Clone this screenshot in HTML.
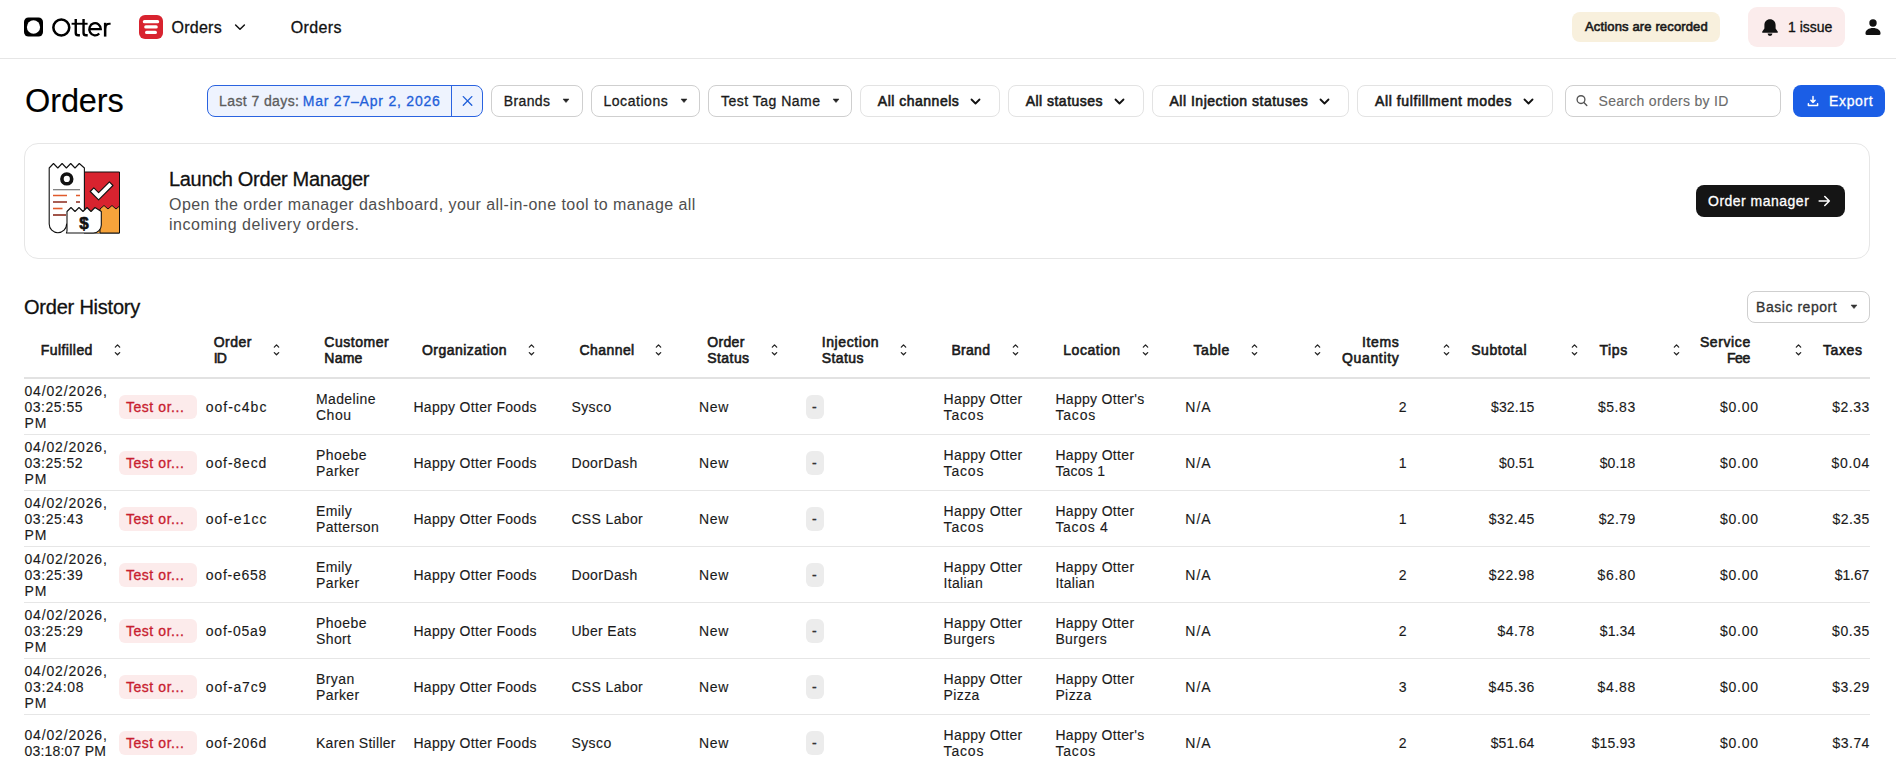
<!DOCTYPE html><html><head><meta charset="utf-8"><style>
html,body{margin:0;padding:0;background:#fff;width:1896px;height:769px;overflow:hidden;position:relative;font-family:"Liberation Sans",sans-serif;}
.t{position:absolute;white-space:nowrap;}
.b{position:absolute;box-sizing:border-box;}
</style></head><body>
<div class="b" style="left:0px;top:58px;width:1896px;height:1px;background:#e6e6e6"></div>
<svg class="b" style="left:24px;top:17px" width="19" height="20" viewBox="0 0 19 20"><rect x="0" y="0.5" width="19" height="19" rx="4.5" fill="#000"/><ellipse cx="9.5" cy="10" rx="6.6" ry="6.8" fill="#fff"/></svg>
<svg class="b" style="left:0;top:0" width="120" height="50" viewBox="0 0 120 50"><g fill="none" stroke="#000"><circle cx="61.3" cy="27.45" r="7.95" stroke-width="2.55"/><path d="M75.75 19 V33 Q75.75 35.3 78.2 35.3 H79.9 M83.55 19 V33 Q83.55 35.3 86 35.3 H87.7" stroke-width="2.4"/><path d="M71.6 23.75 H87.6" stroke-width="1.9"/><path d="M89.3 29.2 H100.8 A5.75 6.1 0 1 0 99.2 33.5" stroke-width="2.3"/><path d="M105.15 22.8 V36.6" stroke-width="2.5"/><path d="M105.15 28.5 Q105.15 23.75 109.6 23.75 H110.6" stroke-width="2.2"/></g></svg>
<svg class="b" style="left:139px;top:15px" width="24" height="24" viewBox="0 0 24 24"><rect width="24" height="24" rx="6" fill="#d8232f"/><rect x="3.8" y="5" width="16.4" height="3.3" rx="1.65" fill="#fff"/><rect x="5.2" y="10.3" width="13.6" height="3.3" rx="1.65" fill="#fff"/><rect x="6" y="15.8" width="12" height="3.3" rx="1.65" fill="#fff"/></svg>
<div class="t" style="top:17.66px;font-size:16px;line-height:19.2px;color:#111;-webkit-text-stroke:0.3px #111;letter-spacing:0.260px;left:171.50px;">Orders</div>
<svg class="b" style="left:234px;top:22px" width="12" height="10" viewBox="0 0 12 10"><path d="M1.6 3 L6 7.3 L10.4 3" fill="none" stroke="#111" stroke-width="1.5" stroke-linecap="round" stroke-linejoin="round"/></svg>
<div class="t" style="top:17.66px;font-size:16px;line-height:19.2px;color:#111;-webkit-text-stroke:0.3px #111;letter-spacing:0.360px;left:290.70px;">Orders</div>
<div class="b" style="left:1572px;top:12px;width:148px;height:30px;background:#f8f0dd;border-radius:8px"></div>
<div class="t" style="top:18.90px;font-size:13px;line-height:15.6px;color:#1a1a1a;-webkit-text-stroke:0.6px #1a1a1a;letter-spacing:0.145px;left:1585.00px;">Actions are recorded</div>
<div class="b" style="left:1748px;top:7px;width:97px;height:40px;background:#fbecec;border-radius:9px"></div>
<svg class="b" style="left:1761px;top:18px" width="18" height="19" viewBox="0 0 18 19"><path d="M9 1.2c-3.3 0-5.6 2.6-5.6 5.8v3.6L1.3 13.4c-.4.6 0 1.3.7 1.3h14c.7 0 1.1-.7.7-1.3l-2.1-2.8V7c0-3.2-2.3-5.8-5.6-5.8z" fill="#111"/><path d="M6.6 15.6h4.8a2.4 2.4 0 0 1-4.8 0z" fill="#111"/></svg>
<div class="t" style="top:18.75px;font-size:14px;line-height:16.8px;color:#111;-webkit-text-stroke:0.3px #111;letter-spacing:0.007px;left:1788.00px;">1 issue</div>
<svg class="b" style="left:1864px;top:18px" width="18" height="18" viewBox="0 0 18 18"><circle cx="9" cy="5" r="3.7" fill="#111"/><path d="M1.5 15.2c0-3 3.2-5.2 7.5-5.2s7.5 2.2 7.5 5.2v.6c0 .7-.5 1.2-1.2 1.2H2.7c-.7 0-1.2-.5-1.2-1.2z" fill="#111"/></svg>
<div class="t" style="top:81.94px;font-size:32.5px;line-height:39.0px;color:#000;-webkit-text-stroke:0.12px #000;letter-spacing:-0.105px;left:25.00px;">Orders</div>
<div class="b" style="left:207px;top:85px;width:276px;height:32px;background:#eef3fe;border:1px solid #2a63e0;border-radius:8px"></div>
<div class="b" style="left:451px;top:85px;width:1px;height:32px;background:#2a63e0"></div>
<div class="t" style="top:93.05px;font-size:14px;line-height:16.8px;color:#5c5c5c;-webkit-text-stroke:0.3px #5c5c5c;letter-spacing:0.410px;left:219.00px;">Last 7 days:</div>
<div class="t" style="top:93.05px;font-size:14px;line-height:16.8px;color:#1f5fd9;-webkit-text-stroke:0.3px #1f5fd9;letter-spacing:0.791px;left:302.70px;">Mar 27–Apr 2, 2026</div>
<svg class="b" style="left:461px;top:95px" width="12" height="12" viewBox="0 0 12 12"><path d="M2.3 1.6 L10.8 10.2 M10.8 1.6 L2.3 10.2" stroke="#1f5fd9" stroke-width="1.35" stroke-linecap="round"/></svg>
<div class="b" style="left:491px;top:85px;width:92px;height:32px;background:#fff;border:1px solid #cfcfcf;border-radius:8px"></div>
<div class="t" style="top:93.05px;font-size:14px;line-height:16.8px;color:#1a1a1a;-webkit-text-stroke:0.3px #1a1a1a;letter-spacing:0.368px;left:503.80px;">Brands</div>
<svg class="b" style="left:561.9px;top:98px" width="8" height="6" viewBox="0 0 8 6"><path d="M1 1 L7 1 L4 4.6 Z" fill="#222" stroke="#222" stroke-width="0.5" stroke-linejoin="round"/></svg>
<div class="b" style="left:591px;top:85px;width:109px;height:32px;background:#fff;border:1px solid #cfcfcf;border-radius:8px"></div>
<div class="t" style="top:93.05px;font-size:14px;line-height:16.8px;color:#1a1a1a;-webkit-text-stroke:0.3px #1a1a1a;letter-spacing:0.559px;left:603.40px;">Locations</div>
<svg class="b" style="left:679.9px;top:98px" width="8" height="6" viewBox="0 0 8 6"><path d="M1 1 L7 1 L4 4.6 Z" fill="#222" stroke="#222" stroke-width="0.5" stroke-linejoin="round"/></svg>
<div class="b" style="left:708px;top:85px;width:144px;height:32px;background:#fff;border:1px solid #cfcfcf;border-radius:8px"></div>
<div class="t" style="top:93.05px;font-size:14px;line-height:16.8px;color:#1a1a1a;-webkit-text-stroke:0.3px #1a1a1a;letter-spacing:0.490px;left:721.00px;">Test Tag Name</div>
<svg class="b" style="left:832.4px;top:98px" width="8" height="6" viewBox="0 0 8 6"><path d="M1 1 L7 1 L4 4.6 Z" fill="#222" stroke="#222" stroke-width="0.5" stroke-linejoin="round"/></svg>
<div class="b" style="left:860px;top:85px;width:140px;height:32px;background:#fff;border:1px solid #e3e3e3;border-radius:8px"></div>
<div class="t" style="top:93.05px;font-size:14px;line-height:16.8px;color:#1a1a1a;-webkit-text-stroke:0.6px #1a1a1a;letter-spacing:0.501px;left:877.80px;">All channels</div>
<svg class="b" style="left:969.6px;top:96.6px" width="12" height="10" viewBox="0 0 12 10"><path d="M1.5 2.5 L5.5 6.5 L9.5 2.5" fill="none" stroke="#111" stroke-width="1.8" stroke-linecap="round" stroke-linejoin="round"/></svg>
<div class="b" style="left:1008px;top:85px;width:136px;height:32px;background:#fff;border:1px solid #e3e3e3;border-radius:8px"></div>
<div class="t" style="top:93.05px;font-size:14px;line-height:16.8px;color:#1a1a1a;-webkit-text-stroke:0.6px #1a1a1a;letter-spacing:0.474px;left:1025.70px;">All statuses</div>
<svg class="b" style="left:1114px;top:96.6px" width="12" height="10" viewBox="0 0 12 10"><path d="M1.5 2.5 L5.5 6.5 L9.5 2.5" fill="none" stroke="#111" stroke-width="1.8" stroke-linecap="round" stroke-linejoin="round"/></svg>
<div class="b" style="left:1152px;top:85px;width:197px;height:32px;background:#fff;border:1px solid #e3e3e3;border-radius:8px"></div>
<div class="t" style="top:93.05px;font-size:14px;line-height:16.8px;color:#1a1a1a;-webkit-text-stroke:0.6px #1a1a1a;letter-spacing:0.504px;left:1169.50px;">All Injection statuses</div>
<svg class="b" style="left:1318.8px;top:96.6px" width="12" height="10" viewBox="0 0 12 10"><path d="M1.5 2.5 L5.5 6.5 L9.5 2.5" fill="none" stroke="#111" stroke-width="1.8" stroke-linecap="round" stroke-linejoin="round"/></svg>
<div class="b" style="left:1357px;top:85px;width:196px;height:32px;background:#fff;border:1px solid #e3e3e3;border-radius:8px"></div>
<div class="t" style="top:93.05px;font-size:14px;line-height:16.8px;color:#1a1a1a;-webkit-text-stroke:0.6px #1a1a1a;letter-spacing:0.601px;left:1375.00px;">All fulfillment modes</div>
<svg class="b" style="left:1522.6px;top:96.6px" width="12" height="10" viewBox="0 0 12 10"><path d="M1.5 2.5 L5.5 6.5 L9.5 2.5" fill="none" stroke="#111" stroke-width="1.8" stroke-linecap="round" stroke-linejoin="round"/></svg>
<div class="b" style="left:1565px;top:85px;width:216px;height:32px;background:#fff;border:1px solid #cfcfcf;border-radius:8px"></div>
<svg class="b" style="left:1575px;top:94px" width="14" height="14" viewBox="0 0 14 14"><circle cx="6" cy="5.6" r="3.9" fill="none" stroke="#555" stroke-width="1.35"/><path d="M8.9 8.5 L11.8 11.6" stroke="#555" stroke-width="1.4" stroke-linecap="round"/></svg>
<div class="t" style="top:93.05px;font-size:14px;line-height:16.8px;color:#6b6b6b;-webkit-text-stroke:0.12px #6b6b6b;letter-spacing:0.289px;left:1598.60px;">Search orders by ID</div>
<div class="b" style="left:1793px;top:85px;width:92px;height:32px;background:#1b5ee6;border-radius:8px"></div>
<svg class="b" style="left:1806px;top:94px" width="14" height="14" viewBox="0 0 14 14"><path d="M7 2.4 V8.4 M4.9 6.3 L7 8.4 L9.1 6.3" fill="none" stroke="#fff" stroke-width="1.5" stroke-linecap="round" stroke-linejoin="round"/><path d="M2.4 9.7 V11.4 H11.6 V9.7" fill="none" stroke="#fff" stroke-width="1.5" stroke-linecap="round" stroke-linejoin="round"/></svg>
<div class="t" style="top:93.05px;font-size:14px;line-height:16.8px;color:#fff;-webkit-text-stroke:0.3px #fff;letter-spacing:0.648px;left:1829.00px;">Export</div>
<div class="b" style="left:24px;top:143px;width:1846px;height:116px;border:1px solid #e6e6e6;border-radius:14px"></div>
<svg class="b" style="left:0;top:0" width="200" height="260" viewBox="0 0 200 260">
<path d="M84 172 H119.5 V233 H84 Z" fill="#d8232f" stroke="#111" stroke-width="1"/><path d="M84.5 210 H100 V233 H84.5 Z" fill="#f6a33b"/>
<path d="M100 209 L104 205.5 L108 209 L112 205.5 L116 209 L119.5 206 V233 H100 Z" fill="#f6a33b" stroke="#111" stroke-width="1"/>
<path d="M90.2 191.5 L93.8 187.9 L98.6 192.7 L109.4 181.9 L113 185.5 L98.6 199.9 Z" fill="#fff" stroke="#111" stroke-width="1.1" stroke-linejoin="round"/>
<path d="M49.2 168 L53.5 163.5 L57.8 168 L62.1 163.5 L66.4 168 L70.7 163.5 L75 168 L79.3 163.5 L84.4 168 V226 H66.6 V224 A8.7 8.7 0 0 1 49.2 224 Z" fill="#fff" stroke="#111" stroke-width="1.1" stroke-linejoin="round"/>
<circle cx="66.8" cy="178.9" r="4.9" fill="none" stroke="#111" stroke-width="3.6"/>
<path d="M53 189.7 H80" stroke="#777" stroke-width="1.2"/>
<path d="M53 195.5 H67 M76 195.5 H80" stroke="#e05a2b" stroke-width="1.6"/>
<path d="M53 202 H67 M76 202 H80" stroke="#8a2a1c" stroke-width="1.6"/>
<path d="M53 208.5 H62.5" stroke="#e05a2b" stroke-width="1.6"/>
<path d="M53 215 H66" stroke="#8a2a1c" stroke-width="1.6"/>
<path d="M67 211.5 L71 207.5 L75 211.5 L79 207.5 L83 211.5 L87 207.5 L91 211.5 L95 207.5 L101.3 211.5 V225 A8 8 0 0 1 93.3 233 H66.4 A9 9 0 0 0 67 231 Z" fill="#fff" stroke="#111" stroke-width="1.1" stroke-linejoin="round"/>
<text x="84" y="229.3" font-family="Liberation Sans" font-weight="700" font-size="17" text-anchor="middle" fill="#111" stroke="#111" stroke-width="0.6">$</text>
</svg>
<div class="t" style="top:167.37px;font-size:20px;line-height:24.0px;color:#111;-webkit-text-stroke:0.3px #111;letter-spacing:-0.331px;left:169.00px;">Launch Order Manager</div>
<div class="t" style="top:195.26px;font-size:16px;line-height:20px;color:#4f4f4f;letter-spacing:0.449px;left:169.00px;">Open the order manager dashboard, your all-in-one tool to manage all</div>
<div class="t" style="top:215.26px;font-size:16px;line-height:20px;color:#4f4f4f;letter-spacing:0.506px;left:169.00px;">incoming delivery orders.</div>
<div class="b" style="left:1696px;top:185px;width:149px;height:32px;background:#151515;border-radius:8px"></div>
<div class="t" style="top:192.75px;font-size:14px;line-height:16.8px;color:#fff;-webkit-text-stroke:0.3px #fff;letter-spacing:0.489px;left:1708.00px;">Order manager</div>
<svg class="b" style="left:1818px;top:195px" width="13" height="12" viewBox="0 0 13 12"><path d="M1.2 6 H11.3 M6.8 1.5 L11.3 6 L6.8 10.5" fill="none" stroke="#fff" stroke-width="1.6" stroke-linecap="round" stroke-linejoin="round"/></svg>
<div class="t" style="top:294.67px;font-size:20px;line-height:24.0px;color:#111;-webkit-text-stroke:0.3px #111;letter-spacing:-0.217px;left:24.00px;">Order History</div>
<div class="b" style="left:1747px;top:291px;width:123px;height:32px;background:#fff;border:1px solid #cfcfcf;border-radius:8px"></div>
<div class="t" style="top:298.75px;font-size:14px;line-height:16.8px;color:#333;-webkit-text-stroke:0.3px #333;letter-spacing:0.546px;left:1756.00px;">Basic report</div>
<svg class="b" style="left:1849.5px;top:304px" width="8" height="6" viewBox="0 0 8 6"><path d="M1 1 L7 1 L4 4.6 Z" fill="#333" stroke="#333" stroke-width="0.5" stroke-linejoin="round"/></svg>
<div class="t" style="top:342.85px;font-size:14px;line-height:15.8px;color:#1a1a1a;-webkit-text-stroke:0.6px #1a1a1a;letter-spacing:0.432px;left:40.70px;">Fulfilled</div>
<svg class="b" style="left:112.9px;top:343px" width="9" height="14" viewBox="0 0 9 14"><path d="M2.3 4.1 L4.5 1.9 L6.7 4.1 M2.3 9.6 L4.5 11.8 L6.7 9.6" fill="none" stroke="#222" stroke-width="1.3" stroke-linecap="round" stroke-linejoin="round"/></svg>
<div class="t" style="top:335.05px;font-size:14px;line-height:15.8px;color:#1a1a1a;-webkit-text-stroke:0.6px #1a1a1a;letter-spacing:0.503px;left:213.70px;">Order</div>
<div class="t" style="top:350.85px;font-size:14px;line-height:15.8px;color:#1a1a1a;-webkit-text-stroke:0.6px #1a1a1a;letter-spacing:-0.800px;left:213.70px;">ID</div>
<svg class="b" style="left:271.8px;top:343px" width="9" height="14" viewBox="0 0 9 14"><path d="M2.3 4.1 L4.5 1.9 L6.7 4.1 M2.3 9.6 L4.5 11.8 L6.7 9.6" fill="none" stroke="#222" stroke-width="1.3" stroke-linecap="round" stroke-linejoin="round"/></svg>
<div class="t" style="top:335.05px;font-size:14px;line-height:15.8px;color:#1a1a1a;-webkit-text-stroke:0.6px #1a1a1a;letter-spacing:0.517px;left:324.30px;">Customer</div>
<div class="t" style="top:350.85px;font-size:14px;line-height:15.8px;color:#1a1a1a;-webkit-text-stroke:0.6px #1a1a1a;letter-spacing:0.218px;left:324.30px;">Name</div>
<div class="t" style="top:342.85px;font-size:14px;line-height:15.8px;color:#1a1a1a;-webkit-text-stroke:0.6px #1a1a1a;letter-spacing:0.475px;left:421.90px;">Organization</div>
<svg class="b" style="left:526.9px;top:343px" width="9" height="14" viewBox="0 0 9 14"><path d="M2.3 4.1 L4.5 1.9 L6.7 4.1 M2.3 9.6 L4.5 11.8 L6.7 9.6" fill="none" stroke="#222" stroke-width="1.3" stroke-linecap="round" stroke-linejoin="round"/></svg>
<div class="t" style="top:342.85px;font-size:14px;line-height:15.8px;color:#1a1a1a;-webkit-text-stroke:0.6px #1a1a1a;letter-spacing:0.408px;left:579.60px;">Channel</div>
<svg class="b" style="left:654.2px;top:343px" width="9" height="14" viewBox="0 0 9 14"><path d="M2.3 4.1 L4.5 1.9 L6.7 4.1 M2.3 9.6 L4.5 11.8 L6.7 9.6" fill="none" stroke="#222" stroke-width="1.3" stroke-linecap="round" stroke-linejoin="round"/></svg>
<div class="t" style="top:335.05px;font-size:14px;line-height:15.8px;color:#1a1a1a;-webkit-text-stroke:0.6px #1a1a1a;letter-spacing:0.328px;left:707.30px;">Order</div>
<div class="t" style="top:350.85px;font-size:14px;line-height:15.8px;color:#1a1a1a;-webkit-text-stroke:0.6px #1a1a1a;letter-spacing:0.422px;left:707.30px;">Status</div>
<svg class="b" style="left:769.6px;top:343px" width="9" height="14" viewBox="0 0 9 14"><path d="M2.3 4.1 L4.5 1.9 L6.7 4.1 M2.3 9.6 L4.5 11.8 L6.7 9.6" fill="none" stroke="#222" stroke-width="1.3" stroke-linecap="round" stroke-linejoin="round"/></svg>
<div class="t" style="top:335.05px;font-size:14px;line-height:15.8px;color:#1a1a1a;-webkit-text-stroke:0.6px #1a1a1a;letter-spacing:0.594px;left:821.70px;">Injection</div>
<div class="t" style="top:350.85px;font-size:14px;line-height:15.8px;color:#1a1a1a;-webkit-text-stroke:0.6px #1a1a1a;letter-spacing:0.422px;left:821.70px;">Status</div>
<svg class="b" style="left:899px;top:343px" width="9" height="14" viewBox="0 0 9 14"><path d="M2.3 4.1 L4.5 1.9 L6.7 4.1 M2.3 9.6 L4.5 11.8 L6.7 9.6" fill="none" stroke="#222" stroke-width="1.3" stroke-linecap="round" stroke-linejoin="round"/></svg>
<div class="t" style="top:342.85px;font-size:14px;line-height:15.8px;color:#1a1a1a;-webkit-text-stroke:0.6px #1a1a1a;letter-spacing:0.310px;left:951.40px;">Brand</div>
<svg class="b" style="left:1011px;top:343px" width="9" height="14" viewBox="0 0 9 14"><path d="M2.3 4.1 L4.5 1.9 L6.7 4.1 M2.3 9.6 L4.5 11.8 L6.7 9.6" fill="none" stroke="#222" stroke-width="1.3" stroke-linecap="round" stroke-linejoin="round"/></svg>
<div class="t" style="top:342.85px;font-size:14px;line-height:15.8px;color:#1a1a1a;-webkit-text-stroke:0.6px #1a1a1a;letter-spacing:0.538px;left:1063.30px;">Location</div>
<svg class="b" style="left:1140.7px;top:343px" width="9" height="14" viewBox="0 0 9 14"><path d="M2.3 4.1 L4.5 1.9 L6.7 4.1 M2.3 9.6 L4.5 11.8 L6.7 9.6" fill="none" stroke="#222" stroke-width="1.3" stroke-linecap="round" stroke-linejoin="round"/></svg>
<div class="t" style="top:342.85px;font-size:14px;line-height:15.8px;color:#1a1a1a;-webkit-text-stroke:0.6px #1a1a1a;letter-spacing:0.633px;left:1193.40px;">Table</div>
<svg class="b" style="left:1249.6px;top:343px" width="9" height="14" viewBox="0 0 9 14"><path d="M2.3 4.1 L4.5 1.9 L6.7 4.1 M2.3 9.6 L4.5 11.8 L6.7 9.6" fill="none" stroke="#222" stroke-width="1.3" stroke-linecap="round" stroke-linejoin="round"/></svg>
<svg class="b" style="left:1313px;top:343px" width="9" height="14" viewBox="0 0 9 14"><path d="M2.3 4.1 L4.5 1.9 L6.7 4.1 M2.3 9.6 L4.5 11.8 L6.7 9.6" fill="none" stroke="#222" stroke-width="1.3" stroke-linecap="round" stroke-linejoin="round"/></svg>
<div class="t" style="top:335.05px;font-size:14px;line-height:15.8px;color:#1a1a1a;-webkit-text-stroke:0.6px #1a1a1a;letter-spacing:0.643px;right:496.66px;text-align:right;">Items</div>
<div class="t" style="top:350.85px;font-size:14px;line-height:15.8px;color:#1a1a1a;-webkit-text-stroke:0.6px #1a1a1a;letter-spacing:0.652px;right:496.65px;text-align:right;">Quantity</div>
<svg class="b" style="left:1442.4px;top:343px" width="9" height="14" viewBox="0 0 9 14"><path d="M2.3 4.1 L4.5 1.9 L6.7 4.1 M2.3 9.6 L4.5 11.8 L6.7 9.6" fill="none" stroke="#222" stroke-width="1.3" stroke-linecap="round" stroke-linejoin="round"/></svg>
<div class="t" style="top:342.85px;font-size:14px;line-height:15.8px;color:#1a1a1a;-webkit-text-stroke:0.6px #1a1a1a;letter-spacing:0.561px;left:1471.20px;">Subtotal</div>
<svg class="b" style="left:1570.2px;top:343px" width="9" height="14" viewBox="0 0 9 14"><path d="M2.3 4.1 L4.5 1.9 L6.7 4.1 M2.3 9.6 L4.5 11.8 L6.7 9.6" fill="none" stroke="#222" stroke-width="1.3" stroke-linecap="round" stroke-linejoin="round"/></svg>
<div class="t" style="top:342.85px;font-size:14px;line-height:15.8px;color:#1a1a1a;-webkit-text-stroke:0.6px #1a1a1a;letter-spacing:0.624px;left:1599.40px;">Tips</div>
<svg class="b" style="left:1671.5px;top:343px" width="9" height="14" viewBox="0 0 9 14"><path d="M2.3 4.1 L4.5 1.9 L6.7 4.1 M2.3 9.6 L4.5 11.8 L6.7 9.6" fill="none" stroke="#222" stroke-width="1.3" stroke-linecap="round" stroke-linejoin="round"/></svg>
<div class="t" style="top:335.05px;font-size:14px;line-height:15.8px;color:#1a1a1a;-webkit-text-stroke:0.6px #1a1a1a;letter-spacing:0.603px;right:145.20px;text-align:right;">Service</div>
<div class="t" style="top:350.85px;font-size:14px;line-height:15.8px;color:#1a1a1a;-webkit-text-stroke:0.6px #1a1a1a;letter-spacing:-0.462px;right:146.26px;text-align:right;">Fee</div>
<svg class="b" style="left:1794px;top:343px" width="9" height="14" viewBox="0 0 9 14"><path d="M2.3 4.1 L4.5 1.9 L6.7 4.1 M2.3 9.6 L4.5 11.8 L6.7 9.6" fill="none" stroke="#222" stroke-width="1.3" stroke-linecap="round" stroke-linejoin="round"/></svg>
<div class="t" style="top:342.85px;font-size:14px;line-height:15.8px;color:#1a1a1a;-webkit-text-stroke:0.6px #1a1a1a;letter-spacing:0.607px;left:1823.00px;">Taxes</div>
<div class="b" style="left:24px;top:377px;width:1846px;height:2px;background:#e2e2e2"></div>
<div class="b" style="left:24px;top:434px;width:1846px;height:1px;background:#e6e6e6"></div>
<div class="t" style="top:384.05px;font-size:14px;line-height:15.8px;color:#1a1a1a;-webkit-text-stroke:0.12px #1a1a1a;letter-spacing:0.836px;left:24.50px;">04/02/2026,</div>
<div class="t" style="top:399.85px;font-size:14px;line-height:15.8px;color:#1a1a1a;-webkit-text-stroke:0.12px #1a1a1a;letter-spacing:0.495px;left:24.50px;">03:25:55</div>
<div class="t" style="top:415.65px;font-size:14px;line-height:15.8px;color:#1a1a1a;-webkit-text-stroke:0.12px #1a1a1a;letter-spacing:0.966px;left:24.50px;">PM</div>
<div class="b" style="left:119px;top:395px;width:78px;height:24px;background:#fcebeb;border-radius:6px"></div>
<div class="t" style="top:399.35px;font-size:14px;line-height:16.8px;color:#c8202f;-webkit-text-stroke:0.3px #c8202f;letter-spacing:0.566px;left:125.90px;">Test or...</div>
<div class="t" style="top:399.85px;font-size:14px;line-height:15.8px;color:#1a1a1a;-webkit-text-stroke:0.12px #1a1a1a;letter-spacing:0.986px;left:205.80px;">oof-c4bc</div>
<div class="t" style="top:391.95px;font-size:14px;line-height:15.8px;color:#1a1a1a;-webkit-text-stroke:0.12px #1a1a1a;letter-spacing:0.373px;left:316.00px;">Madeline</div>
<div class="t" style="top:407.75px;font-size:14px;line-height:15.8px;color:#1a1a1a;-webkit-text-stroke:0.12px #1a1a1a;letter-spacing:0.513px;left:316.00px;">Chou</div>
<div class="t" style="top:399.85px;font-size:14px;line-height:15.8px;color:#1a1a1a;-webkit-text-stroke:0.12px #1a1a1a;letter-spacing:0.304px;left:413.40px;">Happy Otter Foods</div>
<div class="t" style="top:399.85px;font-size:14px;line-height:15.8px;color:#1a1a1a;-webkit-text-stroke:0.12px #1a1a1a;letter-spacing:0.438px;left:571.40px;">Sysco</div>
<div class="t" style="top:399.85px;font-size:14px;line-height:15.8px;color:#1a1a1a;-webkit-text-stroke:0.12px #1a1a1a;letter-spacing:0.644px;left:699.00px;">New</div>
<div class="b" style="left:806px;top:395px;width:18px;height:24px;background:#ececec;border-radius:6px"></div>
<div class="t" style="top:399.35px;font-size:14px;line-height:16.8px;color:#333;-webkit-text-stroke:0.3px #333;left:812.10px;">-</div>
<div class="t" style="top:391.95px;font-size:14px;line-height:15.8px;color:#1a1a1a;-webkit-text-stroke:0.12px #1a1a1a;letter-spacing:0.318px;left:943.60px;">Happy Otter</div>
<div class="t" style="top:407.75px;font-size:14px;line-height:15.8px;color:#1a1a1a;-webkit-text-stroke:0.12px #1a1a1a;letter-spacing:0.826px;left:943.60px;">Tacos</div>
<div class="t" style="top:391.95px;font-size:14px;line-height:15.8px;color:#1a1a1a;-webkit-text-stroke:0.12px #1a1a1a;letter-spacing:0.302px;left:1055.40px;">Happy Otter's</div>
<div class="t" style="top:407.75px;font-size:14px;line-height:15.8px;color:#1a1a1a;-webkit-text-stroke:0.12px #1a1a1a;letter-spacing:0.826px;left:1055.40px;">Tacos</div>
<div class="t" style="top:399.85px;font-size:14px;line-height:15.8px;color:#1a1a1a;-webkit-text-stroke:0.12px #1a1a1a;letter-spacing:1.093px;left:1185.20px;">N/A</div>
<div class="t" style="top:399.85px;font-size:14px;line-height:15.8px;color:#1a1a1a;-webkit-text-stroke:0.12px #1a1a1a;letter-spacing:0.474px;right:488.93px;text-align:right;">2</div>
<div class="t" style="top:399.85px;font-size:14px;line-height:15.8px;color:#1a1a1a;-webkit-text-stroke:0.12px #1a1a1a;letter-spacing:0.097px;right:361.50px;text-align:right;">$32.15</div>
<div class="t" style="top:399.85px;font-size:14px;line-height:15.8px;color:#1a1a1a;-webkit-text-stroke:0.12px #1a1a1a;letter-spacing:0.553px;right:260.25px;text-align:right;">$5.83</div>
<div class="t" style="top:399.85px;font-size:14px;line-height:15.8px;color:#1a1a1a;-webkit-text-stroke:0.12px #1a1a1a;letter-spacing:0.721px;right:137.28px;text-align:right;">$0.00</div>
<div class="t" style="top:399.85px;font-size:14px;line-height:15.8px;color:#1a1a1a;-webkit-text-stroke:0.12px #1a1a1a;letter-spacing:0.525px;right:26.07px;text-align:right;">$2.33</div>
<div class="b" style="left:24px;top:490px;width:1846px;height:1px;background:#e6e6e6"></div>
<div class="t" style="top:440.05px;font-size:14px;line-height:15.8px;color:#1a1a1a;-webkit-text-stroke:0.12px #1a1a1a;letter-spacing:0.836px;left:24.50px;">04/02/2026,</div>
<div class="t" style="top:455.85px;font-size:14px;line-height:15.8px;color:#1a1a1a;-webkit-text-stroke:0.12px #1a1a1a;letter-spacing:0.495px;left:24.50px;">03:25:52</div>
<div class="t" style="top:471.65px;font-size:14px;line-height:15.8px;color:#1a1a1a;-webkit-text-stroke:0.12px #1a1a1a;letter-spacing:0.966px;left:24.50px;">PM</div>
<div class="b" style="left:119px;top:451px;width:78px;height:24px;background:#fcebeb;border-radius:6px"></div>
<div class="t" style="top:455.35px;font-size:14px;line-height:16.8px;color:#c8202f;-webkit-text-stroke:0.3px #c8202f;letter-spacing:0.566px;left:125.90px;">Test or...</div>
<div class="t" style="top:455.85px;font-size:14px;line-height:15.8px;color:#1a1a1a;-webkit-text-stroke:0.12px #1a1a1a;letter-spacing:0.874px;left:205.80px;">oof-8ecd</div>
<div class="t" style="top:447.95px;font-size:14px;line-height:15.8px;color:#1a1a1a;-webkit-text-stroke:0.12px #1a1a1a;letter-spacing:0.444px;left:316.00px;">Phoebe</div>
<div class="t" style="top:463.75px;font-size:14px;line-height:15.8px;color:#1a1a1a;-webkit-text-stroke:0.12px #1a1a1a;letter-spacing:0.379px;left:316.00px;">Parker</div>
<div class="t" style="top:455.85px;font-size:14px;line-height:15.8px;color:#1a1a1a;-webkit-text-stroke:0.12px #1a1a1a;letter-spacing:0.304px;left:413.40px;">Happy Otter Foods</div>
<div class="t" style="top:455.85px;font-size:14px;line-height:15.8px;color:#1a1a1a;-webkit-text-stroke:0.12px #1a1a1a;letter-spacing:0.414px;left:571.40px;">DoorDash</div>
<div class="t" style="top:455.85px;font-size:14px;line-height:15.8px;color:#1a1a1a;-webkit-text-stroke:0.12px #1a1a1a;letter-spacing:0.644px;left:699.00px;">New</div>
<div class="b" style="left:806px;top:451px;width:18px;height:24px;background:#ececec;border-radius:6px"></div>
<div class="t" style="top:455.35px;font-size:14px;line-height:16.8px;color:#333;-webkit-text-stroke:0.3px #333;left:812.10px;">-</div>
<div class="t" style="top:447.95px;font-size:14px;line-height:15.8px;color:#1a1a1a;-webkit-text-stroke:0.12px #1a1a1a;letter-spacing:0.318px;left:943.60px;">Happy Otter</div>
<div class="t" style="top:463.75px;font-size:14px;line-height:15.8px;color:#1a1a1a;-webkit-text-stroke:0.12px #1a1a1a;letter-spacing:0.826px;left:943.60px;">Tacos</div>
<div class="t" style="top:447.95px;font-size:14px;line-height:15.8px;color:#1a1a1a;-webkit-text-stroke:0.12px #1a1a1a;letter-spacing:0.318px;left:1055.40px;">Happy Otter</div>
<div class="t" style="top:463.75px;font-size:14px;line-height:15.8px;color:#1a1a1a;-webkit-text-stroke:0.12px #1a1a1a;letter-spacing:0.215px;left:1055.40px;">Tacos 1</div>
<div class="t" style="top:455.85px;font-size:14px;line-height:15.8px;color:#1a1a1a;-webkit-text-stroke:0.12px #1a1a1a;letter-spacing:1.093px;left:1185.20px;">N/A</div>
<div class="t" style="top:455.85px;font-size:14px;line-height:15.8px;color:#1a1a1a;-webkit-text-stroke:0.12px #1a1a1a;letter-spacing:-1.906px;right:491.31px;text-align:right;">1</div>
<div class="t" style="top:455.85px;font-size:14px;line-height:15.8px;color:#1a1a1a;-webkit-text-stroke:0.12px #1a1a1a;letter-spacing:0.077px;right:361.52px;text-align:right;">$0.51</div>
<div class="t" style="top:455.85px;font-size:14px;line-height:15.8px;color:#1a1a1a;-webkit-text-stroke:0.12px #1a1a1a;letter-spacing:0.133px;right:260.67px;text-align:right;">$0.18</div>
<div class="t" style="top:455.85px;font-size:14px;line-height:15.8px;color:#1a1a1a;-webkit-text-stroke:0.12px #1a1a1a;letter-spacing:0.721px;right:137.28px;text-align:right;">$0.00</div>
<div class="t" style="top:455.85px;font-size:14px;line-height:15.8px;color:#1a1a1a;-webkit-text-stroke:0.12px #1a1a1a;letter-spacing:0.721px;right:25.88px;text-align:right;">$0.04</div>
<div class="b" style="left:24px;top:546px;width:1846px;height:1px;background:#e6e6e6"></div>
<div class="t" style="top:496.05px;font-size:14px;line-height:15.8px;color:#1a1a1a;-webkit-text-stroke:0.12px #1a1a1a;letter-spacing:0.836px;left:24.50px;">04/02/2026,</div>
<div class="t" style="top:511.85px;font-size:14px;line-height:15.8px;color:#1a1a1a;-webkit-text-stroke:0.12px #1a1a1a;letter-spacing:0.575px;left:24.50px;">03:25:43</div>
<div class="t" style="top:527.65px;font-size:14px;line-height:15.8px;color:#1a1a1a;-webkit-text-stroke:0.12px #1a1a1a;letter-spacing:0.966px;left:24.50px;">PM</div>
<div class="b" style="left:119px;top:507px;width:78px;height:24px;background:#fcebeb;border-radius:6px"></div>
<div class="t" style="top:511.35px;font-size:14px;line-height:16.8px;color:#c8202f;-webkit-text-stroke:0.3px #c8202f;letter-spacing:0.566px;left:125.90px;">Test or...</div>
<div class="t" style="top:511.85px;font-size:14px;line-height:15.8px;color:#1a1a1a;-webkit-text-stroke:0.12px #1a1a1a;letter-spacing:0.986px;left:205.80px;">oof-e1cc</div>
<div class="t" style="top:503.95px;font-size:14px;line-height:15.8px;color:#1a1a1a;-webkit-text-stroke:0.12px #1a1a1a;letter-spacing:0.394px;left:316.00px;">Emily</div>
<div class="t" style="top:519.75px;font-size:14px;line-height:15.8px;color:#1a1a1a;-webkit-text-stroke:0.12px #1a1a1a;letter-spacing:0.345px;left:316.00px;">Patterson</div>
<div class="t" style="top:511.85px;font-size:14px;line-height:15.8px;color:#1a1a1a;-webkit-text-stroke:0.12px #1a1a1a;letter-spacing:0.304px;left:413.40px;">Happy Otter Foods</div>
<div class="t" style="top:511.85px;font-size:14px;line-height:15.8px;color:#1a1a1a;-webkit-text-stroke:0.12px #1a1a1a;letter-spacing:0.358px;left:571.40px;">CSS Labor</div>
<div class="t" style="top:511.85px;font-size:14px;line-height:15.8px;color:#1a1a1a;-webkit-text-stroke:0.12px #1a1a1a;letter-spacing:0.644px;left:699.00px;">New</div>
<div class="b" style="left:806px;top:507px;width:18px;height:24px;background:#ececec;border-radius:6px"></div>
<div class="t" style="top:511.35px;font-size:14px;line-height:16.8px;color:#333;-webkit-text-stroke:0.3px #333;left:812.10px;">-</div>
<div class="t" style="top:503.95px;font-size:14px;line-height:15.8px;color:#1a1a1a;-webkit-text-stroke:0.12px #1a1a1a;letter-spacing:0.318px;left:943.60px;">Happy Otter</div>
<div class="t" style="top:519.75px;font-size:14px;line-height:15.8px;color:#1a1a1a;-webkit-text-stroke:0.12px #1a1a1a;letter-spacing:0.826px;left:943.60px;">Tacos</div>
<div class="t" style="top:503.95px;font-size:14px;line-height:15.8px;color:#1a1a1a;-webkit-text-stroke:0.12px #1a1a1a;letter-spacing:0.318px;left:1055.40px;">Happy Otter</div>
<div class="t" style="top:519.75px;font-size:14px;line-height:15.8px;color:#1a1a1a;-webkit-text-stroke:0.12px #1a1a1a;letter-spacing:0.682px;left:1055.40px;">Tacos 4</div>
<div class="t" style="top:511.85px;font-size:14px;line-height:15.8px;color:#1a1a1a;-webkit-text-stroke:0.12px #1a1a1a;letter-spacing:1.093px;left:1185.20px;">N/A</div>
<div class="t" style="top:511.85px;font-size:14px;line-height:15.8px;color:#1a1a1a;-webkit-text-stroke:0.12px #1a1a1a;letter-spacing:-1.906px;right:491.31px;text-align:right;">1</div>
<div class="t" style="top:511.85px;font-size:14px;line-height:15.8px;color:#1a1a1a;-webkit-text-stroke:0.12px #1a1a1a;letter-spacing:0.563px;right:361.04px;text-align:right;">$32.45</div>
<div class="t" style="top:511.85px;font-size:14px;line-height:15.8px;color:#1a1a1a;-webkit-text-stroke:0.12px #1a1a1a;letter-spacing:0.385px;right:260.41px;text-align:right;">$2.79</div>
<div class="t" style="top:511.85px;font-size:14px;line-height:15.8px;color:#1a1a1a;-webkit-text-stroke:0.12px #1a1a1a;letter-spacing:0.721px;right:137.28px;text-align:right;">$0.00</div>
<div class="t" style="top:511.85px;font-size:14px;line-height:15.8px;color:#1a1a1a;-webkit-text-stroke:0.12px #1a1a1a;letter-spacing:0.497px;right:26.10px;text-align:right;">$2.35</div>
<div class="b" style="left:24px;top:602px;width:1846px;height:1px;background:#e6e6e6"></div>
<div class="t" style="top:552.05px;font-size:14px;line-height:15.8px;color:#1a1a1a;-webkit-text-stroke:0.12px #1a1a1a;letter-spacing:0.836px;left:24.50px;">04/02/2026,</div>
<div class="t" style="top:567.85px;font-size:14px;line-height:15.8px;color:#1a1a1a;-webkit-text-stroke:0.12px #1a1a1a;letter-spacing:0.555px;left:24.50px;">03:25:39</div>
<div class="t" style="top:583.65px;font-size:14px;line-height:15.8px;color:#1a1a1a;-webkit-text-stroke:0.12px #1a1a1a;letter-spacing:0.966px;left:24.50px;">PM</div>
<div class="b" style="left:119px;top:563px;width:78px;height:24px;background:#fcebeb;border-radius:6px"></div>
<div class="t" style="top:567.35px;font-size:14px;line-height:16.8px;color:#c8202f;-webkit-text-stroke:0.3px #c8202f;letter-spacing:0.566px;left:125.90px;">Test or...</div>
<div class="t" style="top:567.85px;font-size:14px;line-height:15.8px;color:#1a1a1a;-webkit-text-stroke:0.12px #1a1a1a;letter-spacing:0.762px;left:205.80px;">oof-e658</div>
<div class="t" style="top:559.95px;font-size:14px;line-height:15.8px;color:#1a1a1a;-webkit-text-stroke:0.12px #1a1a1a;letter-spacing:0.394px;left:316.00px;">Emily</div>
<div class="t" style="top:575.75px;font-size:14px;line-height:15.8px;color:#1a1a1a;-webkit-text-stroke:0.12px #1a1a1a;letter-spacing:0.379px;left:316.00px;">Parker</div>
<div class="t" style="top:567.85px;font-size:14px;line-height:15.8px;color:#1a1a1a;-webkit-text-stroke:0.12px #1a1a1a;letter-spacing:0.304px;left:413.40px;">Happy Otter Foods</div>
<div class="t" style="top:567.85px;font-size:14px;line-height:15.8px;color:#1a1a1a;-webkit-text-stroke:0.12px #1a1a1a;letter-spacing:0.414px;left:571.40px;">DoorDash</div>
<div class="t" style="top:567.85px;font-size:14px;line-height:15.8px;color:#1a1a1a;-webkit-text-stroke:0.12px #1a1a1a;letter-spacing:0.644px;left:699.00px;">New</div>
<div class="b" style="left:806px;top:563px;width:18px;height:24px;background:#ececec;border-radius:6px"></div>
<div class="t" style="top:567.35px;font-size:14px;line-height:16.8px;color:#333;-webkit-text-stroke:0.3px #333;left:812.10px;">-</div>
<div class="t" style="top:559.95px;font-size:14px;line-height:15.8px;color:#1a1a1a;-webkit-text-stroke:0.12px #1a1a1a;letter-spacing:0.318px;left:943.60px;">Happy Otter</div>
<div class="t" style="top:575.75px;font-size:14px;line-height:15.8px;color:#1a1a1a;-webkit-text-stroke:0.12px #1a1a1a;letter-spacing:0.286px;left:943.60px;">Italian</div>
<div class="t" style="top:559.95px;font-size:14px;line-height:15.8px;color:#1a1a1a;-webkit-text-stroke:0.12px #1a1a1a;letter-spacing:0.318px;left:1055.40px;">Happy Otter</div>
<div class="t" style="top:575.75px;font-size:14px;line-height:15.8px;color:#1a1a1a;-webkit-text-stroke:0.12px #1a1a1a;letter-spacing:0.286px;left:1055.40px;">Italian</div>
<div class="t" style="top:567.85px;font-size:14px;line-height:15.8px;color:#1a1a1a;-webkit-text-stroke:0.12px #1a1a1a;letter-spacing:1.093px;left:1185.20px;">N/A</div>
<div class="t" style="top:567.85px;font-size:14px;line-height:15.8px;color:#1a1a1a;-webkit-text-stroke:0.12px #1a1a1a;letter-spacing:0.474px;right:488.93px;text-align:right;">2</div>
<div class="t" style="top:567.85px;font-size:14px;line-height:15.8px;color:#1a1a1a;-webkit-text-stroke:0.12px #1a1a1a;letter-spacing:0.563px;right:361.04px;text-align:right;">$22.98</div>
<div class="t" style="top:567.85px;font-size:14px;line-height:15.8px;color:#1a1a1a;-webkit-text-stroke:0.12px #1a1a1a;letter-spacing:0.665px;right:260.13px;text-align:right;">$6.80</div>
<div class="t" style="top:567.85px;font-size:14px;line-height:15.8px;color:#1a1a1a;-webkit-text-stroke:0.12px #1a1a1a;letter-spacing:0.721px;right:137.28px;text-align:right;">$0.00</div>
<div class="t" style="top:567.85px;font-size:14px;line-height:15.8px;color:#1a1a1a;-webkit-text-stroke:0.12px #1a1a1a;letter-spacing:-0.091px;right:26.69px;text-align:right;">$1.67</div>
<div class="b" style="left:24px;top:658px;width:1846px;height:1px;background:#e6e6e6"></div>
<div class="t" style="top:608.05px;font-size:14px;line-height:15.8px;color:#1a1a1a;-webkit-text-stroke:0.12px #1a1a1a;letter-spacing:0.836px;left:24.50px;">04/02/2026,</div>
<div class="t" style="top:623.85px;font-size:14px;line-height:15.8px;color:#1a1a1a;-webkit-text-stroke:0.12px #1a1a1a;letter-spacing:0.535px;left:24.50px;">03:25:29</div>
<div class="t" style="top:639.65px;font-size:14px;line-height:15.8px;color:#1a1a1a;-webkit-text-stroke:0.12px #1a1a1a;letter-spacing:0.966px;left:24.50px;">PM</div>
<div class="b" style="left:119px;top:619px;width:78px;height:24px;background:#fcebeb;border-radius:6px"></div>
<div class="t" style="top:623.35px;font-size:14px;line-height:16.8px;color:#c8202f;-webkit-text-stroke:0.3px #c8202f;letter-spacing:0.566px;left:125.90px;">Test or...</div>
<div class="t" style="top:623.85px;font-size:14px;line-height:15.8px;color:#1a1a1a;-webkit-text-stroke:0.12px #1a1a1a;letter-spacing:0.762px;left:205.80px;">oof-05a9</div>
<div class="t" style="top:615.95px;font-size:14px;line-height:15.8px;color:#1a1a1a;-webkit-text-stroke:0.12px #1a1a1a;letter-spacing:0.444px;left:316.00px;">Phoebe</div>
<div class="t" style="top:631.75px;font-size:14px;line-height:15.8px;color:#1a1a1a;-webkit-text-stroke:0.12px #1a1a1a;letter-spacing:0.385px;left:316.00px;">Short</div>
<div class="t" style="top:623.85px;font-size:14px;line-height:15.8px;color:#1a1a1a;-webkit-text-stroke:0.12px #1a1a1a;letter-spacing:0.304px;left:413.40px;">Happy Otter Foods</div>
<div class="t" style="top:623.85px;font-size:14px;line-height:15.8px;color:#1a1a1a;-webkit-text-stroke:0.12px #1a1a1a;letter-spacing:0.322px;left:571.40px;">Uber Eats</div>
<div class="t" style="top:623.85px;font-size:14px;line-height:15.8px;color:#1a1a1a;-webkit-text-stroke:0.12px #1a1a1a;letter-spacing:0.644px;left:699.00px;">New</div>
<div class="b" style="left:806px;top:619px;width:18px;height:24px;background:#ececec;border-radius:6px"></div>
<div class="t" style="top:623.35px;font-size:14px;line-height:16.8px;color:#333;-webkit-text-stroke:0.3px #333;left:812.10px;">-</div>
<div class="t" style="top:615.95px;font-size:14px;line-height:15.8px;color:#1a1a1a;-webkit-text-stroke:0.12px #1a1a1a;letter-spacing:0.318px;left:943.60px;">Happy Otter</div>
<div class="t" style="top:631.75px;font-size:14px;line-height:15.8px;color:#1a1a1a;-webkit-text-stroke:0.12px #1a1a1a;letter-spacing:0.376px;left:943.60px;">Burgers</div>
<div class="t" style="top:615.95px;font-size:14px;line-height:15.8px;color:#1a1a1a;-webkit-text-stroke:0.12px #1a1a1a;letter-spacing:0.318px;left:1055.40px;">Happy Otter</div>
<div class="t" style="top:631.75px;font-size:14px;line-height:15.8px;color:#1a1a1a;-webkit-text-stroke:0.12px #1a1a1a;letter-spacing:0.376px;left:1055.40px;">Burgers</div>
<div class="t" style="top:623.85px;font-size:14px;line-height:15.8px;color:#1a1a1a;-webkit-text-stroke:0.12px #1a1a1a;letter-spacing:1.093px;left:1185.20px;">N/A</div>
<div class="t" style="top:623.85px;font-size:14px;line-height:15.8px;color:#1a1a1a;-webkit-text-stroke:0.12px #1a1a1a;letter-spacing:0.474px;right:488.93px;text-align:right;">2</div>
<div class="t" style="top:623.85px;font-size:14px;line-height:15.8px;color:#1a1a1a;-webkit-text-stroke:0.12px #1a1a1a;letter-spacing:0.469px;right:361.13px;text-align:right;">$4.78</div>
<div class="t" style="top:623.85px;font-size:14px;line-height:15.8px;color:#1a1a1a;-webkit-text-stroke:0.12px #1a1a1a;letter-spacing:0.105px;right:260.69px;text-align:right;">$1.34</div>
<div class="t" style="top:623.85px;font-size:14px;line-height:15.8px;color:#1a1a1a;-webkit-text-stroke:0.12px #1a1a1a;letter-spacing:0.721px;right:137.28px;text-align:right;">$0.00</div>
<div class="t" style="top:623.85px;font-size:14px;line-height:15.8px;color:#1a1a1a;-webkit-text-stroke:0.12px #1a1a1a;letter-spacing:0.581px;right:26.02px;text-align:right;">$0.35</div>
<div class="b" style="left:24px;top:714px;width:1846px;height:1px;background:#e6e6e6"></div>
<div class="t" style="top:664.05px;font-size:14px;line-height:15.8px;color:#1a1a1a;-webkit-text-stroke:0.12px #1a1a1a;letter-spacing:0.836px;left:24.50px;">04/02/2026,</div>
<div class="t" style="top:679.85px;font-size:14px;line-height:15.8px;color:#1a1a1a;-webkit-text-stroke:0.12px #1a1a1a;letter-spacing:0.655px;left:24.50px;">03:24:08</div>
<div class="t" style="top:695.65px;font-size:14px;line-height:15.8px;color:#1a1a1a;-webkit-text-stroke:0.12px #1a1a1a;letter-spacing:0.966px;left:24.50px;">PM</div>
<div class="b" style="left:119px;top:675px;width:78px;height:24px;background:#fcebeb;border-radius:6px"></div>
<div class="t" style="top:679.35px;font-size:14px;line-height:16.8px;color:#c8202f;-webkit-text-stroke:0.3px #c8202f;letter-spacing:0.566px;left:125.90px;">Test or...</div>
<div class="t" style="top:679.85px;font-size:14px;line-height:15.8px;color:#1a1a1a;-webkit-text-stroke:0.12px #1a1a1a;letter-spacing:0.874px;left:205.80px;">oof-a7c9</div>
<div class="t" style="top:671.95px;font-size:14px;line-height:15.8px;color:#1a1a1a;-webkit-text-stroke:0.12px #1a1a1a;letter-spacing:0.421px;left:316.00px;">Bryan</div>
<div class="t" style="top:687.75px;font-size:14px;line-height:15.8px;color:#1a1a1a;-webkit-text-stroke:0.12px #1a1a1a;letter-spacing:0.379px;left:316.00px;">Parker</div>
<div class="t" style="top:679.85px;font-size:14px;line-height:15.8px;color:#1a1a1a;-webkit-text-stroke:0.12px #1a1a1a;letter-spacing:0.304px;left:413.40px;">Happy Otter Foods</div>
<div class="t" style="top:679.85px;font-size:14px;line-height:15.8px;color:#1a1a1a;-webkit-text-stroke:0.12px #1a1a1a;letter-spacing:0.358px;left:571.40px;">CSS Labor</div>
<div class="t" style="top:679.85px;font-size:14px;line-height:15.8px;color:#1a1a1a;-webkit-text-stroke:0.12px #1a1a1a;letter-spacing:0.644px;left:699.00px;">New</div>
<div class="b" style="left:806px;top:675px;width:18px;height:24px;background:#ececec;border-radius:6px"></div>
<div class="t" style="top:679.35px;font-size:14px;line-height:16.8px;color:#333;-webkit-text-stroke:0.3px #333;left:812.10px;">-</div>
<div class="t" style="top:671.95px;font-size:14px;line-height:15.8px;color:#1a1a1a;-webkit-text-stroke:0.12px #1a1a1a;letter-spacing:0.318px;left:943.60px;">Happy Otter</div>
<div class="t" style="top:687.75px;font-size:14px;line-height:15.8px;color:#1a1a1a;-webkit-text-stroke:0.12px #1a1a1a;letter-spacing:0.394px;left:943.60px;">Pizza</div>
<div class="t" style="top:671.95px;font-size:14px;line-height:15.8px;color:#1a1a1a;-webkit-text-stroke:0.12px #1a1a1a;letter-spacing:0.318px;left:1055.40px;">Happy Otter</div>
<div class="t" style="top:687.75px;font-size:14px;line-height:15.8px;color:#1a1a1a;-webkit-text-stroke:0.12px #1a1a1a;letter-spacing:0.394px;left:1055.40px;">Pizza</div>
<div class="t" style="top:679.85px;font-size:14px;line-height:15.8px;color:#1a1a1a;-webkit-text-stroke:0.12px #1a1a1a;letter-spacing:1.093px;left:1185.20px;">N/A</div>
<div class="t" style="top:679.85px;font-size:14px;line-height:15.8px;color:#1a1a1a;-webkit-text-stroke:0.12px #1a1a1a;letter-spacing:0.614px;right:488.79px;text-align:right;">3</div>
<div class="t" style="top:679.85px;font-size:14px;line-height:15.8px;color:#1a1a1a;-webkit-text-stroke:0.12px #1a1a1a;letter-spacing:0.610px;right:360.99px;text-align:right;">$45.36</div>
<div class="t" style="top:679.85px;font-size:14px;line-height:15.8px;color:#1a1a1a;-webkit-text-stroke:0.12px #1a1a1a;letter-spacing:0.665px;right:260.13px;text-align:right;">$4.88</div>
<div class="t" style="top:679.85px;font-size:14px;line-height:15.8px;color:#1a1a1a;-webkit-text-stroke:0.12px #1a1a1a;letter-spacing:0.721px;right:137.28px;text-align:right;">$0.00</div>
<div class="t" style="top:679.85px;font-size:14px;line-height:15.8px;color:#1a1a1a;-webkit-text-stroke:0.12px #1a1a1a;letter-spacing:0.553px;right:26.05px;text-align:right;">$3.29</div>
<div class="b" style="left:24px;top:770px;width:1846px;height:1px;background:#e6e6e6"></div>
<div class="t" style="top:727.95px;font-size:14px;line-height:15.8px;color:#1a1a1a;-webkit-text-stroke:0.12px #1a1a1a;letter-spacing:0.836px;left:24.50px;">04/02/2026,</div>
<div class="t" style="top:743.75px;font-size:14px;line-height:15.8px;color:#1a1a1a;-webkit-text-stroke:0.12px #1a1a1a;letter-spacing:0.194px;left:24.50px;">03:18:07 PM</div>
<div class="b" style="left:119px;top:731px;width:78px;height:24px;background:#fcebeb;border-radius:6px"></div>
<div class="t" style="top:735.35px;font-size:14px;line-height:16.8px;color:#c8202f;-webkit-text-stroke:0.3px #c8202f;letter-spacing:0.566px;left:125.90px;">Test or...</div>
<div class="t" style="top:735.85px;font-size:14px;line-height:15.8px;color:#1a1a1a;-webkit-text-stroke:0.12px #1a1a1a;letter-spacing:0.762px;left:205.80px;">oof-206d</div>
<div class="t" style="top:735.85px;font-size:14px;line-height:15.8px;color:#1a1a1a;-webkit-text-stroke:0.12px #1a1a1a;letter-spacing:0.268px;left:316.00px;">Karen Stiller</div>
<div class="t" style="top:735.85px;font-size:14px;line-height:15.8px;color:#1a1a1a;-webkit-text-stroke:0.12px #1a1a1a;letter-spacing:0.304px;left:413.40px;">Happy Otter Foods</div>
<div class="t" style="top:735.85px;font-size:14px;line-height:15.8px;color:#1a1a1a;-webkit-text-stroke:0.12px #1a1a1a;letter-spacing:0.438px;left:571.40px;">Sysco</div>
<div class="t" style="top:735.85px;font-size:14px;line-height:15.8px;color:#1a1a1a;-webkit-text-stroke:0.12px #1a1a1a;letter-spacing:0.644px;left:699.00px;">New</div>
<div class="b" style="left:806px;top:731px;width:18px;height:24px;background:#ececec;border-radius:6px"></div>
<div class="t" style="top:735.35px;font-size:14px;line-height:16.8px;color:#333;-webkit-text-stroke:0.3px #333;left:812.10px;">-</div>
<div class="t" style="top:727.95px;font-size:14px;line-height:15.8px;color:#1a1a1a;-webkit-text-stroke:0.12px #1a1a1a;letter-spacing:0.318px;left:943.60px;">Happy Otter</div>
<div class="t" style="top:743.75px;font-size:14px;line-height:15.8px;color:#1a1a1a;-webkit-text-stroke:0.12px #1a1a1a;letter-spacing:0.826px;left:943.60px;">Tacos</div>
<div class="t" style="top:727.95px;font-size:14px;line-height:15.8px;color:#1a1a1a;-webkit-text-stroke:0.12px #1a1a1a;letter-spacing:0.302px;left:1055.40px;">Happy Otter's</div>
<div class="t" style="top:743.75px;font-size:14px;line-height:15.8px;color:#1a1a1a;-webkit-text-stroke:0.12px #1a1a1a;letter-spacing:0.826px;left:1055.40px;">Tacos</div>
<div class="t" style="top:735.85px;font-size:14px;line-height:15.8px;color:#1a1a1a;-webkit-text-stroke:0.12px #1a1a1a;letter-spacing:1.093px;left:1185.20px;">N/A</div>
<div class="t" style="top:735.85px;font-size:14px;line-height:15.8px;color:#1a1a1a;-webkit-text-stroke:0.12px #1a1a1a;letter-spacing:0.474px;right:488.93px;text-align:right;">2</div>
<div class="t" style="top:735.85px;font-size:14px;line-height:15.8px;color:#1a1a1a;-webkit-text-stroke:0.12px #1a1a1a;letter-spacing:0.190px;right:361.41px;text-align:right;">$51.64</div>
<div class="t" style="top:735.85px;font-size:14px;line-height:15.8px;color:#1a1a1a;-webkit-text-stroke:0.12px #1a1a1a;letter-spacing:0.143px;right:260.66px;text-align:right;">$15.93</div>
<div class="t" style="top:735.85px;font-size:14px;line-height:15.8px;color:#1a1a1a;-webkit-text-stroke:0.12px #1a1a1a;letter-spacing:0.721px;right:137.28px;text-align:right;">$0.00</div>
<div class="t" style="top:735.85px;font-size:14px;line-height:15.8px;color:#1a1a1a;-webkit-text-stroke:0.12px #1a1a1a;letter-spacing:0.441px;right:26.16px;text-align:right;">$3.74</div>
</body></html>
